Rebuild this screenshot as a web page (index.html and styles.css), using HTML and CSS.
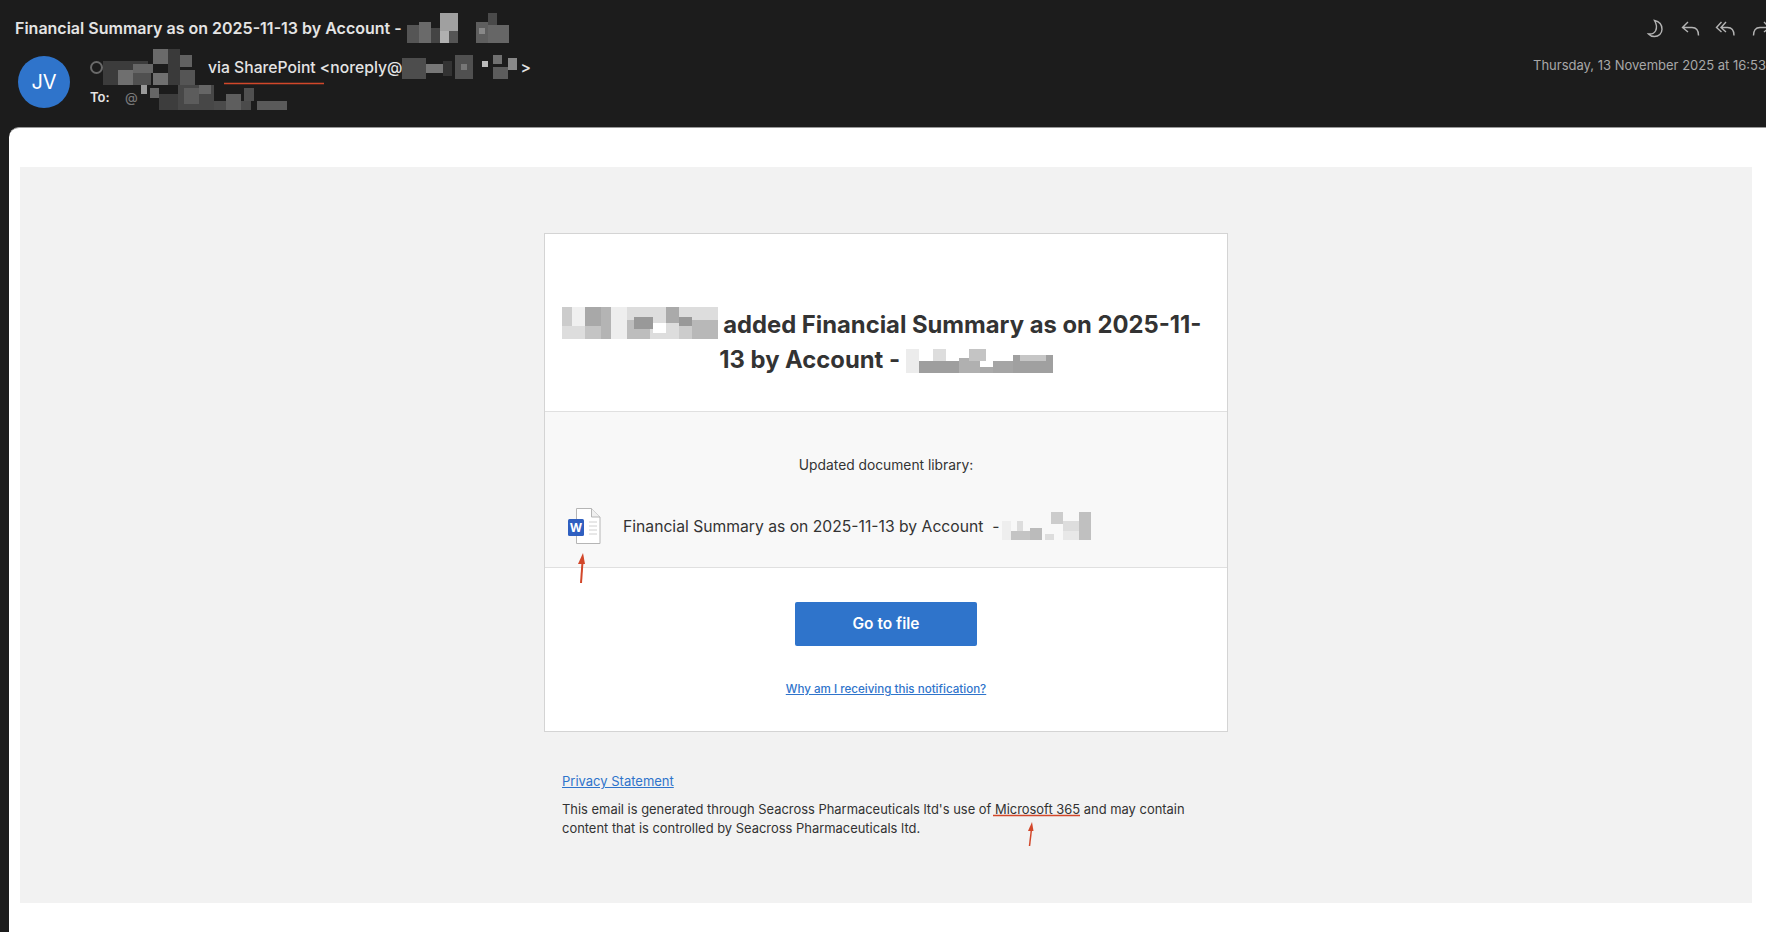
FILE: index.html
```html
<!DOCTYPE html>
<html>
<head>
    <title>Financial Summary as on 2025-11-13</title>
    <link rel="stylesheet" href="styles.css">
</head>
<body>
    <header class="mail-head">
        <div class="head-main">
            <div class="subject">Financial Summary as on 2025-11-13 by Account -
                <svg class="pix pix-subject" width="105" height="30" viewBox="0 0 35 10" shape-rendering="crispEdges">
                    <rect x="0" y="4" width="4" height="6" fill="#555"/><rect x="4" y="3" width="4" height="7" fill="#6a6a6a"/><rect x="8" y="5" width="3" height="5" fill="#444"/>
                    <rect x="11" y="0" width="6" height="6" fill="#a0a0a0"/><rect x="11" y="6" width="3" height="4" fill="#b0b0b0"/><rect x="14" y="6" width="3" height="4" fill="#555"/>
                    <rect x="23" y="3" width="4" height="7" fill="#5e5e5e"/><rect x="27" y="0" width="3" height="4" fill="#4a4a4a"/><rect x="27" y="4" width="7" height="6" fill="#666"/><rect x="24" y="5" width="2" height="2" fill="#888"/>
                </svg>
            </div>
            <div class="sender-row">
                <div class="avatar">JV</div>
                <div class="sender-info">
                    <div class="from">
                        <span class="ring"></span>
                        <svg class="pix pix-from" width="95" height="36" viewBox="0 0 32 12" shape-rendering="crispEdges">
                            <rect x="0" y="4" width="15" height="8" fill="#3c3c3c"/><rect x="5" y="7" width="5" height="5" fill="#6f6f6f"/><rect x="10" y="5" width="7" height="3" fill="#666"/><rect x="10" y="8" width="6" height="4" fill="#505050"/>
                            <rect x="17" y="0" width="5" height="5" fill="#6a6a6a"/><rect x="17" y="8" width="5" height="4" fill="#707070"/><rect x="22" y="0" width="4" height="12" fill="#3a3a3a"/><rect x="26" y="2" width="4" height="4" fill="#616161"/><rect x="26" y="7" width="5" height="5" fill="#555"/>
                        </svg>
                        <span class="via">via SharePoint &lt;noreply@</span><svg class="pix pix-mail" width="118" height="24" viewBox="0 0 40 8" shape-rendering="crispEdges">
                            <rect x="0" y="1" width="8" height="7" fill="#4d4d4d"/><rect x="8" y="3" width="6" height="3" fill="#777"/><rect x="14" y="2" width="3" height="5" fill="#333"/>
                            <rect x="18" y="0" width="6" height="8" fill="#505050"/><rect x="20" y="3" width="2" height="2" fill="#777"/><rect x="27" y="2" width="2" height="2" fill="#bbb"/>
                            <rect x="31" y="0" width="3" height="3" fill="#707070"/><rect x="31" y="4" width="5" height="4" fill="#5c5c5c"/><rect x="36" y="1" width="3" height="4" fill="#888"/>
                        </svg><span class="via">&gt;</span>
                    </div>
                    <div class="to">
                        <b>To:</b>
                        <span class="at">@</span>
                        <svg class="pix pix-to" width="146" height="25" viewBox="0 0 48 8" shape-rendering="crispEdges">
                            <rect x="0" y="0" width="2" height="3" fill="#999"/><rect x="3" y="1" width="3" height="3" fill="#666"/><rect x="6" y="3" width="6" height="5" fill="#3d3d3d"/>
                            <rect x="12" y="0" width="12" height="8" fill="#474747"/><rect x="14" y="1" width="5" height="5" fill="#5c5c5c"/><rect x="19" y="0" width="4" height="3" fill="#666"/>
                            <rect x="24" y="5" width="12" height="3" fill="#4b4b4b"/><rect x="28" y="3" width="5" height="5" fill="#5e5e5e"/><rect x="34" y="1" width="3" height="4" fill="#505050"/><rect x="38" y="5" width="10" height="3" fill="#5a5a5a"/>
                        </svg>
                    </div>
                </div>
            </div>
        </div>
        <div class="head-side">
            <div class="actions">
                <svg width="22" height="22" viewBox="0 0 22 22"><path d="M9.500 2.500c4 .8 7.500 3.800 7.500 8.800 0 4.200-3.300 7.200-7.500 7.200-2.500 0-4.700-1-6-2.500 2.800.3 5.800-.6 7.100-3.200 1.300-2.900.9-7-1.100-10.300z"/></svg>
                <svg width="22" height="22" viewBox="0 0 22 22"><path d="M8 4 2.500 9.500 8 14M3 9.500h9c4.500 0 6.500 3 6.500 8"/></svg>
                <svg width="22" height="22" viewBox="0 0 22 22"><path d="M6.500 4 1.500 9.500l5 4.500M11 4 6 9.500l5 4.500M6.500 9.500h6c4 0 6.500 3 6.500 8"/></svg>
                <svg class="forward" width="22" height="22" viewBox="0 0 22 22"><path d="M14 4l5.500 5.500L14 14M19 9.500h-9c-4.500 0-6.500 3-6.500 8"/></svg>
            </div>
            <div class="date">Thursday, 13 November 2025 at 16:53</div>
        </div>
    </header>

    <main class="sheet">
        <div class="panel">
            <section class="card">
                <div class="card-title">
                    <h1><svg class="pix pix-actor" width="156" height="32" viewBox="0 0 48 10" preserveAspectRatio="none" shape-rendering="crispEdges">
                        <rect x="0" y="0" width="48" height="10" fill="#ddd"/><rect x="0" y="0" width="3" height="6" fill="#ccc"/><rect x="3" y="0" width="4" height="6" fill="#f0f0f0"/><rect x="7" y="0" width="5" height="6" fill="#a8a8a8"/><rect x="7" y="6" width="5" height="4" fill="#c4c4c4"/>
                        <rect x="12" y="0" width="3" height="10" fill="#b4b4b4"/><rect x="15" y="0" width="5" height="10" fill="#eee"/><rect x="20" y="4" width="7" height="6" fill="#bdbdbd"/><rect x="22" y="3" width="6" height="4" fill="#999"/>
                        <rect x="28" y="5" width="4" height="3" fill="#fff"/><rect x="32" y="0" width="4" height="5" fill="#aaa"/><rect x="36" y="3" width="4" height="3" fill="#999"/><rect x="40" y="4" width="8" height="6" fill="#b8b8b8"/><rect x="36" y="6" width="4" height="4" fill="#ccc"/>
                    </svg> added Financial Summary as on 2025-11-<span class="line-end"></span><br>13 by Account - <svg class="pix pix-account" width="147" height="24" viewBox="0 0 44 8" preserveAspectRatio="none" shape-rendering="crispEdges">
                        <rect x="0" y="0" width="4" height="8" fill="#ececec"/><rect x="4" y="4" width="12" height="4" fill="#9e9e9e"/><rect x="8" y="0" width="4" height="4" fill="#ddd"/><rect x="16" y="3" width="6" height="5" fill="#b0b0b0"/><rect x="19" y="0" width="5" height="4" fill="#c4c4c4"/>
                        <rect x="22" y="6" width="4" height="2" fill="#aaa"/><rect x="26" y="4" width="6" height="4" fill="#a5a5a5"/><rect x="32" y="2" width="12" height="6" fill="#a0a0a0"/><rect x="34" y="2" width="8" height="2" fill="#c6c6c6"/>
                    </svg></h1>
                </div>
                <div class="card-file">
                    <p class="lib">Updated document library:</p>
                    <div class="file-row">
                        <svg class="word" width="36" height="38" viewBox="0 0 36 38">
                            <path d="M9.500 1.500h15l8.500 8.500v26.500H9.500z" fill="#fff" stroke="#b5b5b5"/>
                            <path d="M24.500 1.500V10H33" fill="#f0f0f0" stroke="#b5b5b5"/>
                            <path d="M22 15h8M22 19h8M22 23h8M22 27h8" stroke="#d0d0d0"/>
                            <rect x="1" y="12" width="16" height="17" rx="1.500" fill="#2f5fc0"/>
                            <text x="9" y="25" text-anchor="middle" class="word-w">W</text>
                        </svg>
                        <span class="file-name">Financial Summary as on 2025-11-13 by Account &nbsp;-</span>
                        <svg class="pix pix-file" width="92" height="28" viewBox="0 0 30 9" shape-rendering="crispEdges">
                            <rect x="0" y="3" width="3" height="6" fill="#eee"/><rect x="3" y="6" width="6" height="3" fill="#c4c4c4"/><rect x="5" y="3" width="2" height="3" fill="#ddd"/><rect x="9" y="5" width="4" height="4" fill="#bbb"/><rect x="14" y="7" width="3" height="2" fill="#ddd"/>
                            <rect x="16" y="0" width="4" height="4" fill="#ccc"/><rect x="20" y="3" width="5" height="3" fill="#ddd"/><rect x="25" y="0" width="4" height="9" fill="#c0c0c0"/><rect x="20" y="6" width="5" height="3" fill="#e8e8e8"/>
                        </svg>
                    </div>
                </div>
                <div class="card-action">
                    <a class="go-btn" href="#">Go to file</a>
                    <a class="why" href="#">Why am I receiving this notification?</a>
                </div>
            </section>

            <footer class="legal">
                <a class="privacy" href="#">Privacy Statement</a>
                <p>This email is generated through Seacross Pharmaceuticals ltd's use of Microsoft 365 and may contain content that is controlled by Seacross Pharmaceuticals ltd.</p>
            </footer>
        </div>
    </main>

    <!-- red annotations drawn on top of the screenshot -->
    <svg class="marks" width="1766" height="932" viewBox="0 0 1766 932">
        <path d="M224 83.500h100" stroke-width="1.500"/>
        <path d="M993 815.500h87" stroke-width="1.500"/>
        <path d="M581 583l1.500-21" stroke-width="2"/>
        <path d="M578 564l5-11 2 11z" class="head"/>
        <path d="M1029.500 846l2-17" stroke-width="1.500"/>
        <path d="M1028 831l4-9 1.500 9z" class="head"/>
    </svg>
</body>
</html>
```

FILE: styles.css
```css
* {
    box-sizing: border-box;
}

html, body {
    height: 100%;
}

body {
    margin: 0;
    width: 1766px;
    height: 932px;
    overflow: hidden;
    position: relative;
    background: #1c1c1c;
    font-family: Inter, "Noto Sans", sans-serif;
    display: flex;
    flex-direction: column;
}

.pix {
    display: inline-block;
    vertical-align: middle;
    filter: blur(0.7px);
}

/* mail header */
.mail-head {
    height: 127px;
    flex: none;
    display: flex;
    justify-content: space-between;
    color: #e4e4e4;
}

.head-main {
    padding: 13px 0 0 15px;
}

.subject {
    font-size: 16px;
    font-weight: 600;
    line-height: 30px;
    height: 30px;
    display: flex;
    align-items: center;
    gap: 5px;
}

.sender-row {
    display: flex;
    margin: 13px 0 0 3px;
    gap: 20px;
}

.avatar {
    width: 52px;
    height: 52px;
    border-radius: 50%;
    background: #2f74cb;
    color: #fff;
    font-size: 20px;
    display: flex;
    align-items: center;
    justify-content: center;
}

.sender-info {
    font-size: 15.7px;
    font-weight: 500;
}

.from {
    display: flex;
    align-items: center;
    height: 26px;
    margin-top: -2px;
}

.ring {
    width: 13px;
    height: 13px;
    border: 2px solid #6a6a6a;
    border-radius: 50%;
    flex: none;
}

.from .pix-from {
    margin-right: 10px;
}

.to {
    display: flex;
    align-items: center;
    height: 30px;
    margin-top: 2px;
    font-size: 13px;
}

.to b {
    font-weight: 600;
    width: 35px;
}

.at {
    color: #777;
    font-size: 13px;
    width: 16px;
}

.head-side {
    display: flex;
    flex-direction: column;
    align-items: flex-end;
    padding-top: 18px;
}

.actions {
    display: flex;
    gap: 13px;
    margin-right: -6px;
}

.actions svg {
    fill: none;
    stroke: #b4b4b4;
    stroke-width: 1.4;
}

.date {
    font-size: 13px;
    color: #a8a8a8;
    margin-top: 17px;
    white-space: nowrap;
}

/* white sheet */
.sheet {
    flex: 1;
    margin-left: 9px;
    background: #fff;
    border-radius: 10px 0 0 0;
    padding: 39px 14px 30px 11px;
    border-top: 1px solid #999;
}

.panel {
    height: 736px;
    background: #f2f2f2;
    padding-top: 66px;
}

.card {
    width: 684px;
    height: 499px;
    margin: 0 auto;
    background: #fff;
    border: 1px solid #d4d4d4;
    color: #333;
}

.card-title {
    height: 177px;
    padding: 0 17px;
    display: flex;
    align-items: center;
    justify-content: center;
}

h1 {
    margin: 38px 0 0;
    font-size: 23.8px;
    font-weight: 700;
    line-height: 35px;
    text-align: center;
    white-space: nowrap;
}

.line-end {
    display: inline-block;
    width: 9px;
}

.pix-actor {
    margin-top: -6px;
}

.card-file {
    height: 157px;
    background: #f8f8f8;
    border-top: 1px solid #e0e0e0;
    border-bottom: 1px solid #e0e0e0;
    padding: 0 22px;
}

.lib {
    margin: 0;
    padding-top: 44px;
    line-height: 18px;
    font-size: 13.8px;
    font-weight: 400;
    text-align: center;
}

.file-row {
    display: flex;
    align-items: center;
    gap: 20px;
    margin-top: 33px;
    font-size: 15.7px;
}

.file-name {
    margin-right: -17px;
    white-space: nowrap;
}

.word-w {
    font-size: 12px;
    font-weight: 700;
    fill: #fff;
}

.card-action {
    display: flex;
    flex-direction: column;
    align-items: center;
    padding-top: 34px;
}

.go-btn {
    width: 182px;
    height: 44px;
    background: #2f74cb;
    border-radius: 2px;
    color: #fff;
    font-size: 15.5px;
    font-weight: 600;
    line-height: 44px;
    text-align: center;
    text-decoration: none;
}

.why {
    margin-top: 36px;
    font-size: 11.6px;
    font-weight: 500;
    color: #2f74cb;
}

/* footer text */
.legal {
    width: 646px;
    margin: 39px 0 0 542px;
    font-size: 12.93px;
    color: #333;
}

.privacy {
    font-size: 13px;
    color: #2f74cb;
    line-height: 20px;
}

.legal p {
    margin: 9px 0 0;
    line-height: 19px;
}

/* annotations */
.marks {
    position: absolute;
    left: 0;
    top: 0;
    fill: none;
    stroke: #d2472a;
    pointer-events: none;
}

.marks .head {
    fill: #d2472a;
    stroke: none;
}
```
